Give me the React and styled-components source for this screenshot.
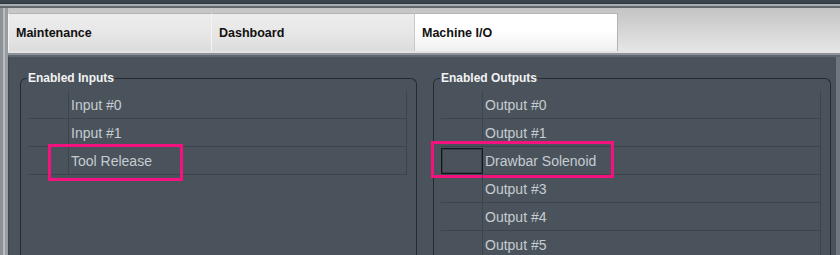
import React from "react";
import styled, { createGlobalStyle } from "styled-components";

const GlobalStyle = createGlobalStyle`
  html, body {
    margin: 0;
    padding: 0;
    background: #3d4650;
  }
  body {
    font-family: "Liberation Sans", Arial, sans-serif;
  }
`;

const Screen = styled.div`
  width: 840px;
  height: 255px;
  overflow: hidden;
  display: flex;
  flex-direction: column;
  background: #4a535c;
`;

const TopEdge = styled.div`
  height: 4px;
  flex: none;
  background: #3a434c;
  border-bottom: 2px solid #a9adb1;
  box-shadow: inset 0 -1px 0 #2f373f;
  & + * {
    border-top: 2px solid #60676e;
  }
`;

const Body = styled.div`
  flex: 1;
  display: flex;
  min-height: 0;
`;

const Rail = styled.div`
  width: 8px;
  flex: none;
  background: linear-gradient(
    to right,
    #8d9297 0px,
    #8d9297 3px,
    #b9bdc1 3px,
    #b9bdc1 5px,
    #989da2 5px,
    #989da2 8px
  );
`;

const Main = styled.div`
  flex: 1;
  display: flex;
  flex-direction: column;
  min-width: 0;
`;

const TabBar = styled.div`
  height: 43px;
  flex: none;
  box-sizing: border-box;
  padding-top: 5px;
  display: flex;
  align-items: flex-end;
  background: linear-gradient(to bottom, #c4c4c4, #e6e6e6);
`;

const Tab = styled.div`
  width: 204px;
  height: 38px;
  box-sizing: border-box;
  padding-left: 7px;
  display: flex;
  align-items: center;
  font-size: 12.5px;
  font-weight: bold;
  color: #111;
  border: 1px solid #b4b4b4;
  border-bottom: none;
  border-left-color: ${(p) => (p.$active ? "#c8c8c8" : "#f4f4f4")};
  background: ${(p) =>
    p.$active
      ? "linear-gradient(to bottom, #ffffff 0%, #ffffff 45%, #efefef 100%)"
      : "linear-gradient(to bottom, #ececec 0%, #e8e8e8 45%, #dcdcdc 100%)"};
  & + & {
    margin-left: -1px;
  }
`;

const TabRule = styled.div`
  height: 2px;
  flex: none;
  background: #e4e4e4;
  border-bottom: 2px solid #8d9398;
  box-shadow: 0 2px 0 #5f6870;
  margin-bottom: 2px;
`;

const Pane = styled.div`
  flex: 1;
  display: grid;
  grid-template-columns: 397px 398px;
  column-gap: 16px;
  align-items: stretch;
  padding: 14px 0 0 11px;
  border-left: 1px solid #3f474f;
  border-right: 4px solid #6f767d;
  background: #4a535c;
`;

const Group = styled.fieldset`
  margin: 0;
  padding: 0 9px 0 7px;
  min-width: 0;
  min-height: 260px;
  border: 1px solid #242a30;
  border-bottom: none;
  border-radius: 6px 6px 0 0;
`;

const Legend = styled.legend`
  margin-left: -1px;
  padding: 0 1px;
  font-size: 12px;
  line-height: 14px;
  font-weight: bold;
  color: #f2f2f2;
`;

const Table = styled.div`
  margin-top: 6px;
  display: flex;
  flex-direction: column;
  border-right: 1px solid #3c444c;
  position: relative;
`;

const Row = styled.div`
  position: relative;
  display: flex;
  height: 28px;
  border-bottom: 1px solid #3c444c;
  box-sizing: border-box;
`;

const KeyCell = styled.div`
  width: ${(p) => p.$width}px;
  flex: none;
  box-sizing: border-box;
  border-right: 1px solid #3c444c;
  ${(p) =>
    p.$selected &&
    `
    border: 1px solid #14181c;
    margin-top: 1px;
    height: 26px;
    box-shadow: inset 0 0 0 1px rgba(20, 24, 28, 0.35);
  `}
`;

const NameCell = styled.div`
  flex: 1;
  padding-left: 2px;
  display: flex;
  align-items: center;
  font-size: 14px;
  color: #c6ccd1;
`;

const Callout = styled.div`
  position: absolute;
  box-sizing: border-box;
  border: 3px solid #f4127f;
  height: 37px;
  pointer-events: none;
`;

const inputs = [
  { name: "Input #0" },
  { name: "Input #1" },
  { name: "Tool Release", callout: { left: 20, top: -3, width: 135 } },
];

const outputs = [
  { name: "Output #0" },
  { name: "Output #1" },
  {
    name: "Drawbar Solenoid",
    selected: true,
    callout: { left: -10, top: -6, width: 183 },
  },
  { name: "Output #3" },
  { name: "Output #4" },
  { name: "Output #5" },
];

const IoTable = ({ rows, keyWidth }) => (
  <Table>
    {rows.map((r) => (
      <Row key={r.name}>
        <KeyCell $width={keyWidth} $selected={r.selected} />
        <NameCell>{r.name}</NameCell>
        {r.callout && (
          <Callout
            style={{
              left: r.callout.left,
              top: r.callout.top,
              width: r.callout.width,
            }}
          />
        )}
      </Row>
    ))}
  </Table>
);

export default function App() {
  return (
    <>
      <GlobalStyle />
      <Screen>
        <TopEdge />
        <Body>
          <Rail />
          <Main>
            <TabBar>
              <Tab>Maintenance</Tab>
              <Tab>Dashboard</Tab>
              <Tab $active>Machine I/O</Tab>
            </TabBar>
            <TabRule />
            <Pane>
              <Group>
                <Legend>Enabled Inputs</Legend>
                <IoTable rows={inputs} keyWidth={41} />
              </Group>
              <Group>
                <Legend>Enabled Outputs</Legend>
                <IoTable rows={outputs} keyWidth={42} />
              </Group>
            </Pane>
          </Main>
        </Body>
      </Screen>
    </>
  );
}
